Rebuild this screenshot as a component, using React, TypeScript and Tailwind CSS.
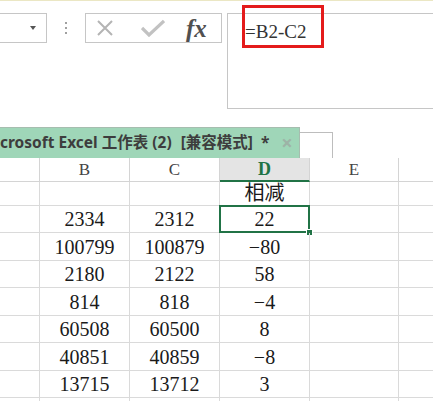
import React from "react";

const rows: [string, string, string][] = [
  ["2334", "2312", "22"],
  ["100799", "100879", "−80"],
  ["2180", "2122", "58"],
  ["814", "818", "−4"],
  ["60508", "60500", "8"],
  ["40851", "40859", "−8"],
  ["13715", "13712", "3"],
];
const heights = ["h-[27px]", "h-[28px]", "h-[27px]", "h-[28px]", "h-[27px]", "h-[28px]", "h-[27px]"];

const serif = { fontFamily: '"Liberation Serif", "Noto Sans CJK SC", serif' };

function Cell({ children, last, className = "" }: { children?: React.ReactNode; last?: boolean; className?: string }) {
  return (
    <div
      className={`flex items-end justify-center pb-[3px] border-b border-[#dadada] ${last ? "" : "border-r"} text-[20px] leading-none text-[#1a1a1a] ${className}`}
      style={serif}
    >
      {children}
    </div>
  );
}

export default function App() {
  return (
    <div className="w-[433px] h-[401px] overflow-hidden bg-white relative">
      <div className="h-px bg-[#ebe7c4]" />
      {/* toolbar */}
      <div className="flex items-start mt-[12px]">
        <div className="w-[47px] h-[30px] border-y border-r border-[#c6c6c6] flex items-center justify-end pr-[10px]">
          <div className="w-0 h-0 border-l-[3.5px] border-r-[3.5px] border-t-[4px] border-l-transparent border-r-transparent border-t-[#555]" />
        </div>
        <div className="w-[38px] h-[30px] flex flex-col items-center justify-center gap-[3px]">
          <div className="w-[2px] h-[2px] bg-[#a0a0a0]" />
          <div className="w-[2px] h-[2px] bg-[#a0a0a0]" />
          <div className="w-[2px] h-[2px] bg-[#a0a0a0]" />
        </div>
        <div className="w-[137px] h-[30px] border border-[#c6c6c6] flex items-center">
          <svg width="18" height="18" viewBox="0 0 18 18" className="ml-[10px]">
            <path d="M2 2 L16 16 M16 2 L2 16" stroke="#b4b4b4" strokeWidth="2" fill="none" />
          </svg>
          <svg width="24" height="18" viewBox="0 0 24 18" className="ml-[27px]">
            <path d="M1 9 L8 16 L23 2" stroke="#c2c2c2" strokeWidth="3.2" fill="none" />
          </svg>
          <span
            className="ml-[21px] text-[25px] leading-none italic font-bold text-[#505050] mt-[1px]"
            style={{ fontFamily: '"Liberation Serif", serif' }}
          >
            fx
          </span>
        </div>
        <div className="ml-[5px] flex-1 h-[96px] border-y border-l border-[#c6c6c6] pl-[17px] pt-[6px]">
          <span className="text-[19px] leading-none text-[#333]" style={serif}>
            =B2-C2
          </span>
        </div>
      </div>
      <div className="absolute left-[242px] top-[5px] w-[82px] h-[43px] border-[3px] border-[#e41b1b]" />

      {/* tabs */}
      <div className="flex items-end h-[31px] mt-[18px]">
        <div
          className="w-[300px] h-[31px] bg-[#9fd6b8] border-t border-r border-[#a6bdaf] flex items-center text-[15.5px] font-bold text-[#3d3d3d] whitespace-nowrap"
          style={{ fontFamily: '"Noto Sans", "Noto Sans CJK SC", sans-serif' }}
        >
          <span>crosoft Excel 工作表 (2)</span>
          <span className="ml-[9px]">[兼容模式]</span>
          <span className="ml-[8px]">*</span>
          <span className="ml-[12px] text-[#9db3a6] text-[20px] leading-none">×</span>
        </div>
        <div className="w-[33px] h-[26px] border-t border-r border-[#bdbdbd] bg-white" />
      </div>

      {/* sheet */}
      <div className="grid grid-cols-[40px_90px_90px_90px_89px_34px]">
        {/* header row */}
        <div className="h-[24px] border-b border-r border-[#d4d4d4]" />
        {["B", "C"].map((l) => (
          <div key={l} className="h-[24px] border-b border-r border-[#d4d4d4] flex items-center justify-center text-[17px] text-[#444]" style={serif}>
            {l}
          </div>
        ))}
        <div className="h-[24px] bg-[#e4e4e4] border-b-2 border-b-[#217346] border-r border-r-[#d4d4d4] flex items-center justify-center text-[18px] font-bold text-[#217346]" style={serif}>
          D
        </div>
        <div className="h-[24px] border-b border-r border-[#d4d4d4] flex items-center justify-center text-[17px] text-[#444]" style={serif}>
          E
        </div>
        <div className="h-[24px] border-b border-[#d4d4d4]" />

        {/* row 1 */}
        <Cell className="h-[24px]" />
        <Cell className="h-[24px]" />
        <Cell className="h-[24px]" />
        <Cell className="h-[24px] text-[19px] pb-[1px]">
          <span style={{ fontFamily: '"Noto Sans CJK SC", sans-serif' }}>相减</span>
        </Cell>
        <Cell className="h-[24px]" />
        <Cell className="h-[24px]" last />

        {rows.map((r, i) => (
          <React.Fragment key={i}>
            <Cell className={heights[i]} />
            <Cell className={heights[i]}>{r[0]}</Cell>
            <Cell className={heights[i]}>{r[1]}</Cell>
            <Cell className={`${heights[i]} relative`}>
              {r[2]}
              {i === 0 && (
                <>
                  <div className="absolute -left-px -top-px -right-px -bottom-px border-2 border-[#217346]" />
                  <div className="absolute -right-[4px] -bottom-[4px] w-[7px] h-[7px] bg-[#217346] border border-white" />
                </>
              )}
            </Cell>
            <Cell className={heights[i]} />
            <Cell className={heights[i]} last />
          </React.Fragment>
        ))}
        <Cell className="h-[27px]" />
        <Cell className="h-[27px]" />
        <Cell className="h-[27px]" />
        <Cell className="h-[27px]" />
        <Cell className="h-[27px]" />
        <Cell className="h-[27px]" last />
      </div>
    </div>
  );
}
